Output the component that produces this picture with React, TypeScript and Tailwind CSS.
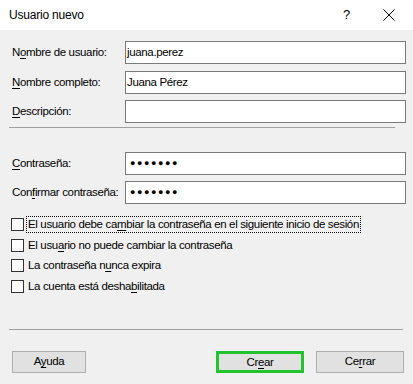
import type { ReactNode } from 'react';

function U({ children }: { children: ReactNode }) {
  return <span className="underline underline-offset-[2px]">{children}</span>;
}

function Field({ label, value, password }: { label: ReactNode; value?: string; password?: boolean }) {
  return (
    <div className="flex items-center h-[23px]">
      <label className="w-[116px] pl-[3px] whitespace-nowrap">{label}</label>
      <div className="w-[281px] h-[23px] bg-white border border-[#7a7a7a] flex items-center pl-[1px]">
        {password ? (
          <div className="flex items-center pl-[3px] tracking-normal">
            {Array.from({ length: 7 }).map((_, i) => (
              <span key={i} className="w-[7px] text-[9px] leading-none">●</span>
            ))}
          </div>
        ) : (
          <span className="whitespace-nowrap">{value}</span>
        )}
      </div>
    </div>
  );
}

function Check({ children, focused }: { children: ReactNode; focused?: boolean }) {
  return (
    <div className="flex items-center h-[17px] pl-[2px]">
      <div className="w-[13px] h-[13px] bg-white border border-[#333333]" />
      <span
        className={
          'ml-[2px] pl-[1px] pr-[1px] h-[17px] flex items-center whitespace-nowrap border border-dotted ' +
          (focused ? 'border-black' : 'border-transparent')
        }
      >
        {children}
      </span>
    </div>
  );
}

export default function App() {
  return (
    <div className="w-[413px] h-[384px] bg-[#f0f0f0] text-[11.5px] tracking-[-0.35px] text-black font-['Liberation_Sans',Arial,sans-serif] flex flex-col overflow-hidden">
      {/* title bar */}
      <div className="h-[30px] bg-white flex items-center pl-[9px] shrink-0">
        <span className="text-[12px] tracking-[-0.2px]">Usuario nuevo</span>
        <span className="ml-auto text-[13px]">?</span>
        <svg className="ml-[33px] mr-[18px]" width="12" height="12" viewBox="0 0 12 12">
          <path d="M0.5 0.5 L11.5 11.5 M11.5 0.5 L0.5 11.5" stroke="#000" strokeWidth="1" fill="none" />
        </svg>
      </div>

      <div className="pl-[9px] flex flex-col">
        <div className="mt-[11px]">
          <Field label={<>N<U>o</U>mbre de usuario:</>} value="juana.perez" />
        </div>
        <div className="mt-[7px]">
          <Field label={<><U>N</U>ombre completo:</>} value="Juana Pérez" />
        </div>
        <div className="mt-[6px]">
          <Field label={<><U>D</U>escripción:</>} value="" />
        </div>

        <div className="mt-[4px] w-[386px] h-px bg-[#a0a0a0]" />

        <div className="mt-[24px]">
          <Field label={<><U>C</U>ontraseña:</>} password />
        </div>
        <div className="mt-[6px]">
          <Field label={<>Con<U>f</U>irmar contraseña:</>} password />
        </div>

        <div className="mt-[12px]">
          <Check focused>El usuario debe ca<U>m</U>biar la contraseña en el siguiente inicio de sesión</Check>
        </div>
        <div className="mt-[4px]">
          <Check>El usu<U>a</U>rio no puede cambiar la contraseña</Check>
        </div>
        <div className="mt-[3px]">
          <Check>La contraseña n<U>u</U>nca expira</Check>
        </div>
        <div className="mt-[4px]">
          <Check>La cuenta está desha<U>b</U>ilitada</Check>
        </div>

        <div className="mt-[34px] w-[394px] h-px bg-[#a0a0a0]" />
      </div>

      <div className="mt-[21px] flex items-center pl-[12px] pr-[9px]">
        <button className="w-[74px] h-[22px] bg-[#e1e1e1] border border-[#adadad]">
          A<U>y</U>uda
        </button>
        <button className="ml-auto w-[88px] h-[22px] bg-[#e1e1e1] border-[3px] border-[#22c32e]">
          Cr<U>e</U>ar
        </button>
        <button className="ml-[12px] w-[88px] h-[22px] bg-[#e1e1e1] border border-[#adadad]">
          Ce<U>r</U>rar
        </button>
      </div>
    </div>
  );
}
